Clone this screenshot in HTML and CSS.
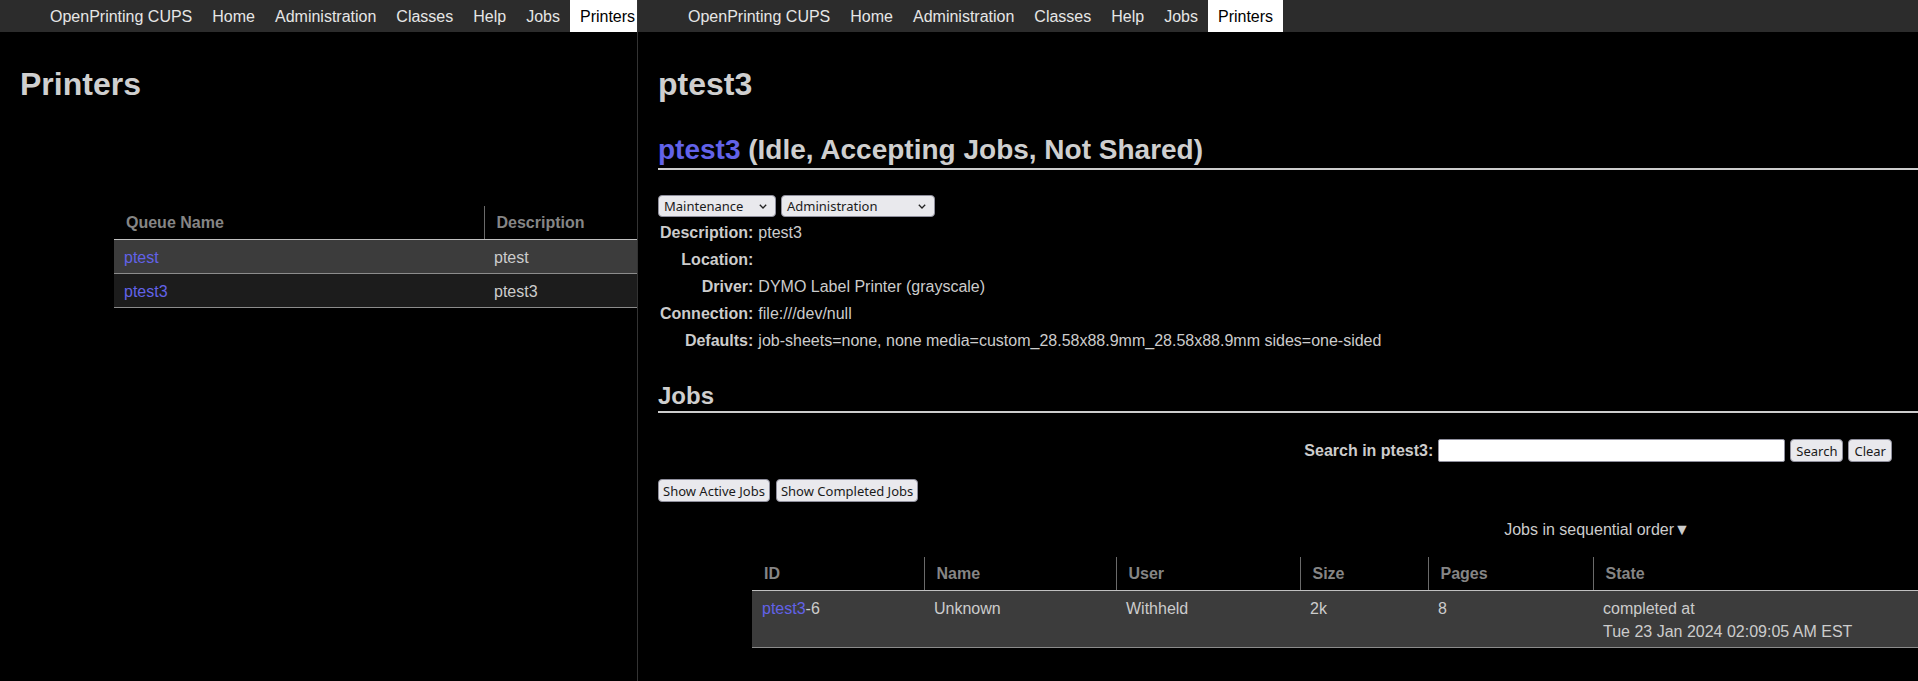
FILE: index.html
```html
<!DOCTYPE html>
<html lang="en">
<head>
<meta charset="utf-8">
<title>Printers - CUPS</title>
<link rel="stylesheet" href="styles.css">
</head>
<body>
<div class="pane pane-left">
  <nav class="nav">
    <a href="#">OpenPrinting CUPS</a>
    <a href="#">Home</a>
    <a href="#">Administration</a>
    <a href="#">Classes</a>
    <a href="#">Help</a>
    <a href="#">Jobs</a>
    <a href="#" class="active">Printers</a>
  </nav>
  <main class="content">
    <h1 class="page-title">Printers</h1>
    <table class="list printers-list">
      <colgroup><col class="c-queue"><col class="c-desc"></colgroup>
      <thead>
        <tr><th>Queue Name</th><th>Description</th></tr>
      </thead>
      <tbody>
        <tr class="odd"><td><a href="#">ptest</a></td><td>ptest</td></tr>
        <tr class="even"><td><a href="#">ptest3</a></td><td>ptest3</td></tr>
      </tbody>
    </table>
  </main>
</div>
<div class="pane pane-right">
  <nav class="nav">
    <a href="#">OpenPrinting CUPS</a>
    <a href="#">Home</a>
    <a href="#">Administration</a>
    <a href="#">Classes</a>
    <a href="#">Help</a>
    <a href="#">Jobs</a>
    <a href="#" class="active">Printers</a>
  </nav>
  <main class="content">
    <h1 class="page-title">ptest3</h1>
    <h2 class="printer-title"><a href="#">ptest3</a> (Idle, Accepting Jobs, Not Shared)</h2>
    <div class="controls">
      <div class="select select-maint"><span>Maintenance</span><svg width="8" height="5" viewBox="0 0 8 5"><path d="M0.8 0.8 L4 4 L7.2 0.8" fill="none" stroke="#222" stroke-width="1.3"/></svg></div>
      <div class="select select-admin"><span>Administration</span><svg width="8" height="5" viewBox="0 0 8 5"><path d="M0.8 0.8 L4 4 L7.2 0.8" fill="none" stroke="#222" stroke-width="1.3"/></svg></div>
    </div>
    <table class="info">
      <tr><th>Description:</th><td>ptest3</td></tr>
      <tr><th>Location:</th><td></td></tr>
      <tr><th>Driver:</th><td>DYMO Label Printer (grayscale)</td></tr>
      <tr><th>Connection:</th><td>file:///dev/null</td></tr>
      <tr><th>Defaults:</th><td>job-sheets=none, none media=custom_28.58x88.9mm_28.58x88.9mm sides=one-sided</td></tr>
    </table>
    <h2 class="section-title">Jobs</h2>
    <form class="search">
      <label class="search-label">Search in ptest3:</label>
      <input class="search-input" type="text">
      <button type="button" class="btn">Search</button>
      <button type="button" class="btn">Clear</button>
    </form>
    <div class="job-buttons">
      <button type="button" class="btn">Show Active Jobs</button>
      <button type="button" class="btn">Show Completed Jobs</button>
    </div>
    <div class="jobs-wrap">
      <div class="order">Jobs in sequential order▼</div>
      <table class="list jobs-list">
        <colgroup>
          <col class="c-id"><col class="c-name"><col class="c-user"><col class="c-size"><col class="c-pages"><col class="c-state">
        </colgroup>
        <thead>
          <tr><th>ID</th><th>Name</th><th>User</th><th>Size</th><th>Pages</th><th>State</th></tr>
        </thead>
        <tbody>
          <tr class="odd">
            <td><a href="#">ptest3</a>-6</td>
            <td>Unknown</td>
            <td>Withheld</td>
            <td>2k</td>
            <td>8</td>
            <td>completed at<br>Tue 23 Jan 2024 02:09:05 AM EST</td>
          </tr>
        </tbody>
      </table>
    </div>
  </main>
</div>
</body>
</html>
```
FILE: styles.css
```css
* { box-sizing: border-box; }

html, body {
  margin: 0;
  background: #000;
}

body {
  display: flex;
  width: 1918px;
  height: 681px;
  overflow: hidden;
  font-family: "Liberation Sans", Arial, sans-serif;
  font-size: 16px;
  color: #cccccc;
}

a { color: #6262e8; text-decoration: none; }

.pane {
  flex: none;
  height: 681px;
  overflow: hidden;
}

.pane-left { width: 637px; }

.pane-right {
  width: 1281px;
  border-left: 1px solid #333;
}

.nav {
  display: flex;
  height: 32px;
  padding-left: 40px;
  background: #2c2c2c;
}

.nav a {
  flex: none;
  display: block;
  height: 32px;
  padding: 2px 10px 0;
  line-height: 30px;
  color: #e6e6e6;
  white-space: nowrap;
}

.nav a.active {
  background: #fff;
  color: #000;
}

.content {
  padding: 0 0 0 20px;
}

.page-title {
  margin: 34px 0 0;
  font-size: 32px;
  line-height: 36px;
  font-weight: bold;
  color: #cfcfcf;
}

.printer-title {
  margin: 32px 0 0;
  padding-bottom: 2px;
  font-size: 28px;
  line-height: 32px;
  font-weight: bold;
  color: #cfcfcf;
  border-bottom: 2px solid #cccccc;
  white-space: nowrap;
}

.controls {
  display: flex;
  gap: 5px;
  margin-top: 25px;
}

.select {
  display: flex;
  align-items: center;
  justify-content: space-between;
  height: 22px;
  padding: 0 8px 0 5px;
  background: #e9e9ed;
  border: 1px solid #8f8f9d;
  border-radius: 4px;
  color: #1b1b1b;
  font-family: "Noto Sans", sans-serif;
  font-size: 13px;
}

.select-maint { width: 118px; }
.select-admin { width: 154px; }

.info {
  margin-top: 2px;
  border-collapse: collapse;
}

.info th,
.info td {
  padding: 1px 2px 0;
  line-height: 26px;
  height: 27px;
  vertical-align: top;
  white-space: nowrap;
}

.info th {
  text-align: right;
  font-weight: bold;
  color: #cccccc;
}

.info td { padding-left: 3px; }

.section-title {
  margin: 28px 0 0;
  font-size: 24px;
  line-height: 28px;
  padding-bottom: 1px;
  font-weight: bold;
  color: #cfcfcf;
  border-bottom: 2px solid #cccccc;
}

.search {
  display: flex;
  justify-content: flex-end;
  align-items: center;
  gap: 5px;
  margin: 26px 0 0;
  padding-right: 26px;
}

.search-label {
  font-weight: bold;
  color: #cccccc;
}

.search-input {
  width: 347px;
  height: 23px;
  margin: 0;
  background: #fff;
  border: 1px solid #8f8f9d;
  border-radius: 2px;
}

.btn {
  height: 23px;
  margin: 0;
  padding: 0 5px;
  background: #e9e9ed;
  border: 1px solid #8f8f9d;
  border-radius: 4px;
  color: #1b1b1b;
  font-family: "Noto Sans", sans-serif;
  font-size: 13px;
  line-height: 20px;
}

.job-buttons .btn { padding: 0 4px; }

.job-buttons {
  display: flex;
  gap: 6px;
  margin-top: 17px;
}

.jobs-wrap {
  width: 1690px;
  margin: 19px 0 0 94px;
}

.order {
  text-align: center;
  line-height: 18px;
  color: #cccccc;
}

.list {
  border-collapse: collapse;
  table-layout: fixed;
}

.printers-list {
  width: 740px;
  margin: 104px 0 0 94px;
}

.jobs-list {
  width: 1690px;
  margin-top: 18px;
}

.c-queue, .c-desc { width: 370px; }
.c-id { width: 172px; }
.c-name { width: 192px; }
.c-user { width: 184px; }
.c-size { width: 128px; }
.c-pages { width: 165px; }
.c-state { width: 849px; }

.list th {
  height: 33px;
  padding: 2px 0 0 12px;
  text-align: left;
  font-weight: bold;
  color: #858585;
  border-bottom: 1px solid #c0c0c0;
}

.list th + th { border-left: 1px solid #6a6a6a; }

.list td {
  padding: 6px 10px 4px;
  line-height: 23px;
  vertical-align: top;
  color: #cccccc;
  border-bottom: 1px solid #8c8c8c;
  white-space: nowrap;
}

.list tr.odd td { background: #3c3c3c; }
.list tr.even td { background: #1c1c1c; }
```
